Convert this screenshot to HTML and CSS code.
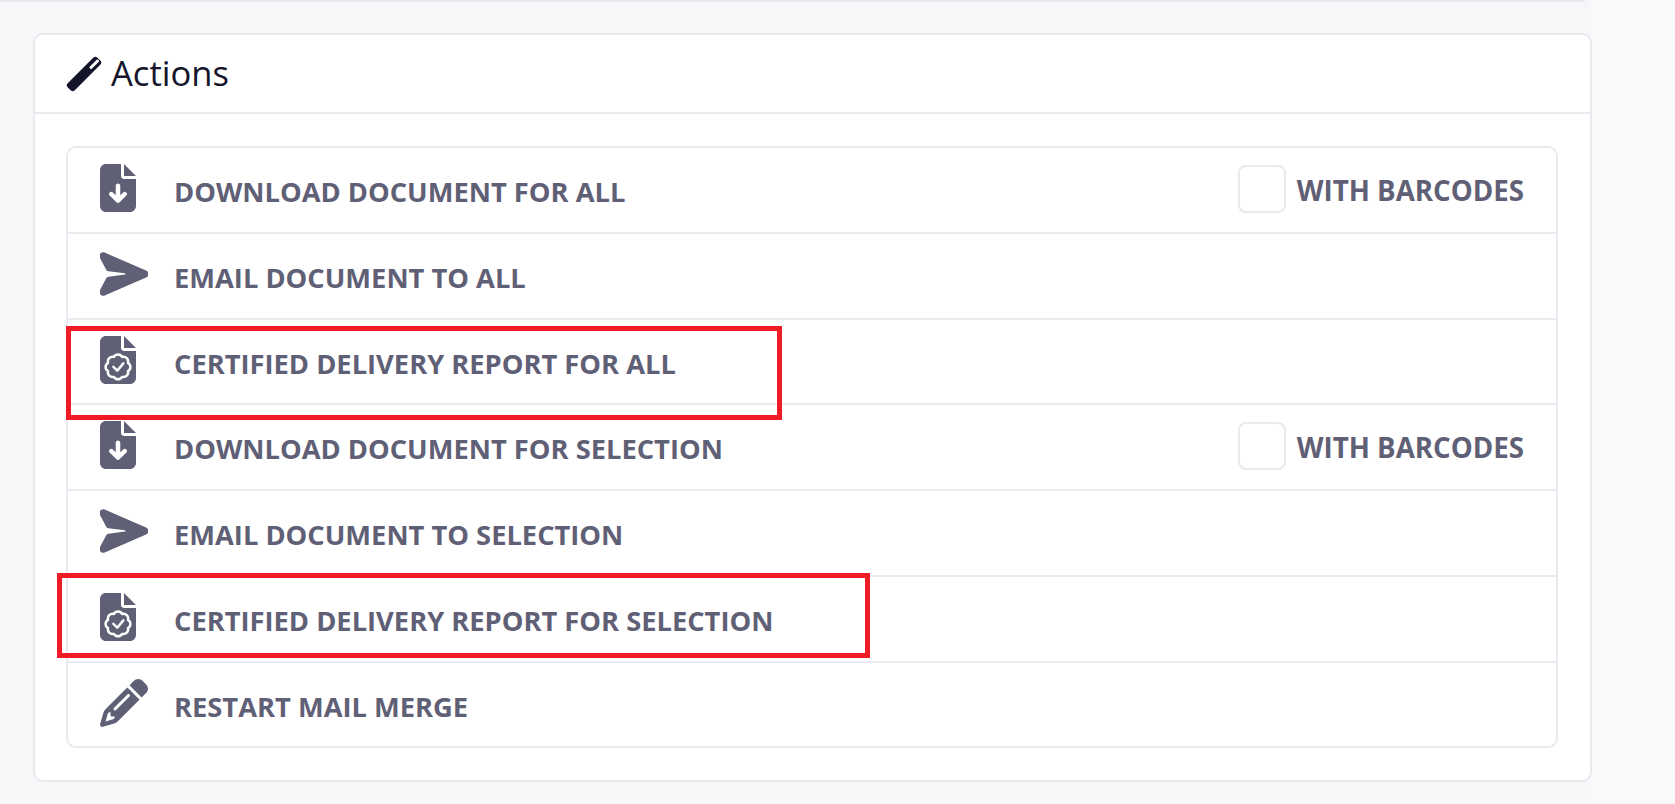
FILE: index.html
```html
<!DOCTYPE html>
<html lang="en">
<head>
    <meta charset="UTF-8">
    <meta name="viewport" content="width=device-width, initial-scale=1.0">
    <title>Actions</title>
    <link rel="stylesheet" href="styles.css">
</head>
<body>

    <svg class="sprites" xmlns="http://www.w3.org/2000/svg">
        <symbol id="icon-download" viewBox="0 0 384 512">
            <path d="M64 0C28.7 0 0 28.7 0 64V448c0 35.3 28.7 64 64 64H320c35.3 0 64-28.7 64-64V160H256c-17.7 0-32-14.3-32-32V0H64zM256 0V128H384L256 0zM216 232V334.1l31-31c9.4-9.4 24.6-9.4 33.9 0s9.4 24.6 0 33.9l-72 72c-9.4 9.4-24.6 9.4-33.9 0l-72-72c-9.4-9.4-9.4-24.6 0-33.9s24.6-9.4 33.9 0l31 31V232c0-13.3 10.7-24 24-24s24 10.7 24 24z"/>
        </symbol>
        <symbol id="icon-send" viewBox="0 0 512 512">
            <path d="M49.9 27.8C15.1 12.7-19.2 50.1-1.2 83.5L68.1 212.2c4.4 8.3 12.6 13.8 21.9 15l176 22c3.4 .4 6 3.3 6 6.7s-2.6 6.3-6 6.7l-176 22c-9.3 1.2-17.5 6.8-21.9 15L-1.2 428.5c-18 33.4 16.3 70.8 51.1 55.7L491.8 292.7c32.1-13.9 32.1-59.5 0-73.4L49.9 27.8z"/>
        </symbol>
        <symbol id="icon-certified" viewBox="0 0 384 512">
            <path d="M64 0C28.7 0 0 28.7 0 64V448c0 35.3 28.7 64 64 64H320c35.3 0 64-28.7 64-64V160H256c-17.7 0-32-14.3-32-32V0H64zM256 0V128H384L256 0z"/>
            <path class="badge" d="M148 224A50 50 0 0 1 236 224A50 50 0 0 1 298 286A50 50 0 0 1 298 374A50 50 0 0 1 236 436A50 50 0 0 1 148 436A50 50 0 0 1 86 374A50 50 0 0 1 86 286A50 50 0 0 1 148 224z"/>
            <path class="badge" d="M142 328l42 42 65-78"/>
        </symbol>
        <symbol id="icon-pencil" viewBox="0 0 512 512">
            <path d="M410.3 231l11.3-11.3-33.9-33.9-62.1-62.1L291.7 89.8l-11.3 11.3-22.6 22.6L58.6 322.9c-10.4 10.4-18 23.3-22.2 37.4L1 480.7c-2.5 8.4-.2 17.5 6.1 23.7s15.3 8.5 23.7 6.1l120.3-35.4c14.1-4.2 27-11.8 37.4-22.2L387.7 253.7 410.3 231zM160 399.4l-9.1 22.7c-4 3.1-8.5 5.4-13.3 6.9L59.4 452l23-78.1c1.4-4.9 3.8-9.4 6.9-13.3l22.7-9.1v32c0 8.8 7.2 16 16 16h32zM362.7 18.7L348.3 33.2 325.7 55.8 314.3 67.1l33.9 33.9 62.1 62.1 33.9 33.9 11.3-11.3 22.6-22.6 14.5-14.5c25-25 25-65.5 0-90.5L453.3 18.7c-25-25-65.5-25-90.5 0zm-47.4 168l-144 144c-6.2 6.2-16.4 6.2-22.6 0s-6.2-16.4 0-22.6l144-144c6.2-6.2 16.4-6.2 22.6 0s6.2 16.4 0 22.6z"/>
        </symbol>
    </svg>

    <main class="page">
        <section class="card">
            <header class="card-header">
                <svg class="wand" viewBox="0 0 36 36">
                    <rect x="-3" y="13" width="42" height="10" rx="3" transform="rotate(-45 18 18)"/>
                    <line x1="25" y1="11.5" x2="31.5" y2="5" class="wand-slot"/>
                </svg>
                <h2>Actions</h2>
            </header>

            <div class="card-body">
                <ul class="action-list">
                    <li class="action">
                        <svg class="icon icon-file"><use href="#icon-download"/></svg>
                        <span class="action-label">DOWNLOAD DOCUMENT FOR ALL</span>
                        <label class="barcodes">
                            <input type="checkbox">
                            <span>WITH BARCODES</span>
                        </label>
                    </li>
                    <li class="action">
                        <svg class="icon"><use href="#icon-send"/></svg>
                        <span class="action-label">EMAIL DOCUMENT TO ALL</span>
                    </li>
                    <li class="action">
                        <svg class="icon icon-file"><use href="#icon-certified"/></svg>
                        <span class="action-label">CERTIFIED DELIVERY REPORT FOR ALL</span>
                    </li>
                    <li class="action">
                        <svg class="icon icon-file"><use href="#icon-download"/></svg>
                        <span class="action-label">DOWNLOAD DOCUMENT FOR SELECTION</span>
                        <label class="barcodes">
                            <input type="checkbox">
                            <span>WITH BARCODES</span>
                        </label>
                    </li>
                    <li class="action">
                        <svg class="icon"><use href="#icon-send"/></svg>
                        <span class="action-label">EMAIL DOCUMENT TO SELECTION</span>
                    </li>
                    <li class="action">
                        <svg class="icon icon-file"><use href="#icon-certified"/></svg>
                        <span class="action-label">CERTIFIED DELIVERY REPORT FOR SELECTION</span>
                    </li>
                    <li class="action">
                        <svg class="icon"><use href="#icon-pencil"/></svg>
                        <span class="action-label">RESTART MAIL MERGE</span>
                    </li>
                </ul>
            </div>
        </section>

        <!-- red annotation boxes drawn over the screenshot -->
        <div class="mark mark-all"></div>
        <div class="mark mark-selection"></div>
    </main>

</body>
</html>
```

FILE: styles.css
```css
* { box-sizing: border-box; }
html, body { margin: 0; height: 100%; }
body { background: #f8f9fb; font-family: "Open Sans", "Noto Sans", Arial, sans-serif; overflow: hidden; }
.sprites { display: none; }

.page { position: relative; width: 1591px; height: 804px; background: #f6f7f9; padding: 33px 0 0 33px; }
.page::before { content: ""; position: absolute; top: 0; left: 0; width: 1585px; height: 2px; background: #e9e9ef; }

.card { width: 1559px; height: 749px; background: #fff; border: 2px solid #e9e9ef; border-radius: 10px; }
.card-header { display: flex; align-items: center; gap: 9px; height: 79px; padding: 0 0 0 31px; border-bottom: 2px solid #e9e9ef; }
.card-header h2 { margin: -2px 0 0; font-size: 34.6px; font-weight: 500; color: #14142b; }
.wand { width: 36px; height: 36px; fill: #14142b; }
.wand-slot { stroke: #fff; stroke-width: 3; stroke-linecap: round; }

.card-body { padding: 32px 32px 0 31px; }
.action-list { list-style: none; margin: 0; padding: 0; height: 602px; border: 2px solid #e9e9ef; border-radius: 10px; overflow: hidden; }
.action { display: flex; align-items: flex-start; height: 85.75px; padding-left: 32px; border-bottom: 2px solid #e9e9ef; color: #5f6076; }
.action:last-child { border-bottom: none; }

.icon { width: 48px; height: 48px; margin-top: 16px; fill: #5f6076; flex: none; }
.icon-file { width: 36px; margin-right: 12px; }
.badge { fill: none; stroke: #fff; stroke-width: 26; stroke-linejoin: round; stroke-linecap: round; }

.action-label { margin-left: 26px; margin-top: 25px; font-size: 27.3px; font-weight: 700; line-height: 37px; white-space: nowrap; }

.barcodes { display: flex; align-items: center; gap: 11px; margin-left: auto; margin-top: 17px; padding-right: 32px; font-size: 27.7px; font-weight: 700; line-height: 37px; white-space: nowrap; }
.barcodes input { appearance: none; width: 48px; height: 48px; margin: 0; background: #fff; border: 2px solid #e9e9ef; border-radius: 8px; }
.barcodes span { margin-top: 3px; }

.mark { position: absolute; border: 5px solid #ef1c26; }
.mark-all { left: 66px; top: 326px; width: 716px; height: 94px; }
.mark-selection { left: 57px; top: 573px; width: 813px; height: 85px; }
```
